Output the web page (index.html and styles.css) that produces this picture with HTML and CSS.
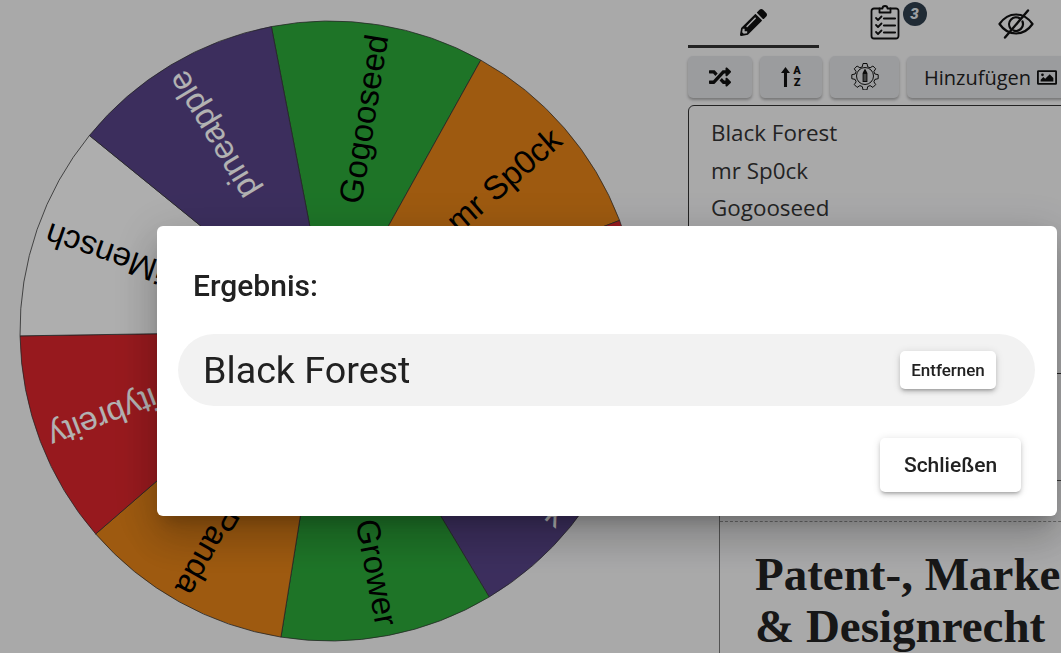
FILE: index.html
```html
<!DOCTYPE html>
<html lang="de">
<head>
<meta charset="utf-8">
<title>Glücksrad</title>
<link rel="stylesheet" href="styles.css">
</head>
<body>
<div class="app">
  <main class="wheel-col">
    <svg class="wheel" viewBox="0 0 688 653" width="688" height="653">
      <g transform="translate(330 331)">
        <g transform="rotate(9.1)"><path class="wedge green" d="M0 0L-106.03 -291.3A310 310 0 0 1 106.03 -291.3Z"/><text class="label" transform="rotate(-90)" x="300" y="11">Gogooseed</text></g>
        <g transform="rotate(49.1)"><path class="wedge orange" d="M0 0L-106.03 -291.3A310 310 0 0 1 106.03 -291.3Z"/><text class="label" transform="rotate(-90)" x="300" y="11">mr Sp0ck</text></g>
        <g transform="rotate(89.1)"><path class="wedge red" d="M0 0L-106.03 -291.3A310 310 0 0 1 106.03 -291.3Z"/><text class="label light" transform="rotate(-90)" x="300" y="11">Tiger</text></g>
        <g transform="rotate(129.1)"><path class="wedge purple" d="M0 0L-106.03 -291.3A310 310 0 0 1 106.03 -291.3Z"/><text class="label light" transform="rotate(-90)" x="300" y="11">Nick</text></g>
        <g transform="rotate(169.1)"><path class="wedge green" d="M0 0L-106.03 -291.3A310 310 0 0 1 106.03 -291.3Z"/><text class="label" transform="rotate(-90)" x="300" y="11">Grower</text></g>
        <g transform="rotate(209.1)"><path class="wedge orange" d="M0 0L-106.03 -291.3A310 310 0 0 1 106.03 -291.3Z"/><text class="label" transform="rotate(-90)" x="300" y="11">Panda</text></g>
        <g transform="rotate(249.1)"><path class="wedge red" d="M0 0L-106.03 -291.3A310 310 0 0 1 106.03 -291.3Z"/><text class="label light" transform="rotate(-90)" x="300" y="11">Kritybreity</text></g>
        <g transform="rotate(289.1)"><path class="wedge white" d="M0 0L-106.03 -291.3A310 310 0 0 1 106.03 -291.3Z"/><text class="label" transform="rotate(-90)" x="300" y="11">iMensch</text></g>
        <g transform="rotate(329.1)"><path class="wedge purple" d="M0 0L-106.03 -291.3A310 310 0 0 1 106.03 -291.3Z"/><text class="label light" transform="rotate(-90)" x="300" y="11">pineapple</text></g>
      </g>
    </svg>
  </main>
  <aside class="side">
    <nav class="tabs">
      <div class="tab tab-active">
        <svg class="ico-pencil" viewBox="0 0 512 512"><path d="M497.9 142.1l-46.1 46.1c-4.7 4.7-12.3 4.7-17 0l-111-111c-4.7-4.7-4.7-12.3 0-17l46.1-46.1c18.7-18.7 49.1-18.7 67.9 0l60.1 60.1c18.8 18.7 18.8 49.1 0 67.9zM284.2 99.8L21.6 362.4.4 483.9c-2.9 16.4 11.4 30.6 27.8 27.8l121.5-21.3 262.6-262.6c4.7-4.7 4.7-12.3 0-17l-111-111c-4.8-4.7-12.4-4.7-17.1 0zM124.1 339.9c-5.5-5.5-5.5-14.3 0-19.8l154-154c5.5-5.5 14.3-5.5 19.8 0s5.5 14.3 0 19.8l-154 154c-5.5 5.5-14.3 5.5-19.8 0zM88 424h48v36.3l-64.5 11.3-31.1-31.1L51.7 376H88v48z"/></svg>
      </div>
      <div class="tab">
        <span class="clip-wrap">
          <svg class="ico-clip" viewBox="0 0 30 38" fill="none" stroke="#111" stroke-width="1.8" stroke-linecap="round" stroke-linejoin="round">
            <path d="M9.500 6.500H4a2.500 2.500 0 0 0-2.500 2.500v25A2.500 2.500 0 0 0 4 36.500h22a2.500 2.500 0 0 0 2.500-2.500V9A2.500 2.500 0 0 0 26 6.500h-5.500"/>
            <path d="M9.500 10.500V6.500h3a2.500 2.500 0 0 1 5 0h3v4z"/>
            <path d="M6 16l2 2 3.500-3.500M6 23l2 2 3.500-3.500M6 30l2 2 3.500-3.500"/>
            <path stroke-width="2.200" d="M14 16.500h11M14 23.500h11M14 30.500h11"/>
          </svg>
          <span class="badge">3</span>
        </span>
      </div>
      <div class="tab">
        <svg class="ico-eye" viewBox="0 0 36 30" fill="none" stroke="#111" stroke-width="2.200" stroke-linecap="round" stroke-linejoin="round">
          <path d="M1.500 15C6 8.500 11.500 5.500 18 5.500S30 8.500 34.500 15C30 21.500 24.500 24.500 18 24.500S6 21.500 1.500 15z"/>
          <path d="M12.500 19.500A7 7 0 0 1 22 9.500M24.500 12.500A7 7 0 0 1 15.500 21.500"/>
          <path stroke-width="2.400" d="M7 28.500L30 1.500"/>
        </svg>
      </div>
    </nav>
    <div class="toolbar">
      <button class="tool tool-a"><svg class="ico-shuffle" viewBox="0 0 512 512"><path d="M504.971 359.029c9.373 9.373 9.373 24.569 0 33.941l-80 79.984c-15.01 15.01-40.971 4.49-40.971-16.971V416h-58.785a12.004 12.004 0 0 1-8.773-3.812l-70.556-75.596 53.333-57.143L352 336h32v-39.981c0-21.438 25.943-31.998 40.971-16.971l80 79.981zM12 176h84l52.781 56.551 53.333-57.143-70.556-75.596A11.999 11.999 0 0 0 122.785 96H12c-6.627 0-12 5.373-12 12v56c0 6.627 5.373 12 12 12zm372 0v39.984c0 21.46 25.961 31.98 40.971 16.971l80-79.984c9.373-9.373 9.373-24.569 0-33.941l-80-79.981C409.943 24.021 384 34.582 384 56.019V96h-58.785a12.004 12.004 0 0 0-8.773 3.812L96 336H12c-6.627 0-12 5.373-12 12v56c0 6.627 5.373 12 12 12h110.785c3.326 0 6.503-1.381 8.773-3.812L352 176h32z"/></svg></button>
      <button class="tool tool-b">
        <svg class="ico-arrow" viewBox="0 0 10 22"><path d="M5 0L10 6.500H6.700V22H3.300V6.500H0z"/></svg>
        <span class="az"><span>A</span><span>Z</span></span>
      </button>
      <button class="tool tool-c">
        <svg class="ico-gear" viewBox="0 0 28 28" fill="none" stroke="#111" stroke-width="1">
          <path d="M12 1.500h4l.7 3.300 2.400 1 2.800-1.800 2.800 2.800-1.800 2.800 1 2.400 3.300.7v4l-3.300.7-1 2.400 1.800 2.800-2.800 2.800-2.800-1.800-2.400 1-.7 3.300h-4l-.7-3.300-2.400-1-2.800 1.800-2.800-2.800 1.800-2.800-1-2.400-3.300-.7v-4l3.300-.7 1-2.400L3.300 6.800l2.800-2.800 2.800 1.800 2.400-1z"/>
          <circle cx="14" cy="14" r="8.500"/>
          <path fill="#111" stroke="none" d="M14 6.500l2.400 4.500v9h-4.800v-9z"/>
          <path stroke="#a5a6a7" stroke-width=".8" d="M13.200 12v7M14.800 12v7"/>
        </svg>
      </button>
      <button class="tool tool-d">
        <span>Hinzufügen</span>
        <svg class="ico-image" viewBox="0 0 22 18"><path fill-rule="evenodd" d="M1.500 1h19A1.500 1.500 0 0 1 22 2.500v13a1.500 1.500 0 0 1-1.500 1.500h-19A1.500 1.500 0 0 1 0 15.500v-13A1.500 1.500 0 0 1 1.500 1zM2 3v12h18V3z"/><path d="M4 13.500v-2l3-3 2 2 5-5 4 4v4z"/><circle cx="6" cy="6" r="1.500"/></svg>
      </button>
    </div>
    <div class="entries">
      <div>Black Forest</div>
      <div>mr Sp0ck</div>
      <div>Gogooseed</div>
      <div>pineapple</div>
      <div>iMensch</div>
      <div>Kritybreity</div>
      <div>Panda</div>
    </div>
    <div class="info"></div>
    <article class="article">
      <div class="dashed"></div>
      <h1 class="headline">Patent-, Marken<br>&amp; Designrecht</h1>
    </article>
  </aside>
</div>
<div class="overlay">
  <section class="dialog">
    <h2 class="dialog-title">Ergebnis:</h2>
    <div class="result">
      <span class="result-name">Black Forest</span>
      <button class="btn btn-small">Entfernen</button>
    </div>
    <div class="dialog-actions">
      <button class="btn btn-large">Schließen</button>
    </div>
  </section>
</div>
</body>
</html>
```
FILE: styles.css
```css
* { box-sizing: border-box; }
html, body { margin: 0; height: 653px; overflow: hidden; background: #f2f2f3; }
.app { display: flex; width: 1061px; height: 653px; overflow: hidden; }
.wheel-col { flex: 0 0 688px; height: 653px; }
.wheel { display: block; }
.wedge { stroke: #333; stroke-width: .7; }
.green { fill: #2ba739; }
.orange { fill: #e28117; }
.red { fill: #d9252b; }
.purple { fill: #564386; }
.white { fill: #fafafa; }
.label { font: 33px "Liberation Sans", Arial, sans-serif; fill: #000; text-anchor: end; }
.label.light { fill: #fff; }

.side { flex: 0 0 393px; width: 393px; display: flex; flex-direction: column; font-family: "Open Sans", "Noto Sans", sans-serif; }
.tabs { display: flex; height: 48px; flex: none; }
.tab { flex: 0 0 131px; display: flex; justify-content: center; align-items: center; }
.tab-active { border-bottom: 3px solid #333; }
.ico-pencil { width: 27px; height: 27px; fill: #111; margin-top: -1px; }
.clip-wrap { position: relative; display: block; width: 30px; height: 38px; margin-top: -6px; }
.ico-clip { display: block; width: 30px; height: 38px; }
.badge { position: absolute; left: 33px; top: 0; width: 24px; height: 24px; border-radius: 50%; background: #2f3e4d; color: #dfe3e8; font: italic 900 15px/24px Roboto, sans-serif; text-align: center; }
.ico-eye { width: 36px; height: 30px; margin-top: -1px; }

.toolbar { display: flex; gap: 8px; margin-top: 8px; height: 42px; flex: none; }
.tool { height: 42px; padding: 0; border: 0; border-radius: 5px; background: #dfe0e2; box-shadow: 0 2px 3px rgba(0,0,0,.3); display: flex; align-items: center; justify-content: center; font: inherit; color: #222; }
.tool-a { width: 64px; }
.tool-b { width: 62px; gap: 3px; }
.tool-c { width: 69px; }
.tool-d { width: 174px; justify-content: flex-start; padding-left: 17px; font-size: 20px; gap: 6px; }
.ico-shuffle { width: 22px; height: 22px; fill: #111; }
.ico-arrow { width: 9px; height: 20px; fill: #111; }
.az { display: flex; flex-direction: column; font: 900 11px/12px Roboto, sans-serif; color: #111; }
.ico-gear { width: 28px; height: 28px; margin-top: -2px; }
.ico-image { width: 20px; height: 17px; fill: #111; }

.entries { margin-top: 7px; height: 269px; flex: none; border: 1px solid #333; border-radius: 6px; padding: 8px 22px; font-size: 22.400px; line-height: 37.500px; color: #333; overflow: hidden; }
.info { height: 107px; flex: none; border-bottom: 1px solid #555; }
.article { margin-left: 31px; padding-top: 40px; border-left: 1px solid #777; flex: 1; }
.dashed { border-top: 1px dashed #999; }
.headline { margin: 26px 0 0 35px; font: 700 47px/52px "Liberation Serif", serif; color: #222; white-space: nowrap; }

.overlay { position: fixed; inset: 0; background: rgba(0,0,0,.3); display: flex; justify-content: flex-end; align-items: flex-start; }
.dialog { width: 900px; height: 290px; margin: 226px 4px 0 0; background: #fff; border-radius: 6px; box-shadow: 0 11px 15px -7px rgba(0,0,0,.2), 0 24px 38px 3px rgba(0,0,0,.14), 0 9px 46px 8px rgba(0,0,0,.12); padding: 0 21px; font-family: Roboto, sans-serif; color: #212121; display: flex; flex-direction: column; }
.dialog-title { margin: 0; padding: 43px 0 0 15px; font-size: 30px; line-height: 34px; font-weight: 500; }
.result { margin-top: 31px; height: 72px; width: 857px; flex: none; border-radius: 36px; background: #f2f2f2; display: flex; align-items: center; justify-content: space-between; padding: 0 39px 0 25px; }
.result-name { font-size: 37.700px; line-height: 72px; }
.btn { border: 0; background: #fff; border-radius: 5px; color: #212121; font-family: Roboto, sans-serif; font-weight: 500; box-shadow: 0 3px 3px -2px rgba(0,0,0,.2), 0 3px 4px rgba(0,0,0,.14), 0 1px 8px rgba(0,0,0,.12); padding: 0; }
.btn-small { width: 96px; height: 38px; font-size: 17px; }
.btn-large { width: 141px; height: 54px; font-size: 21px; }
.dialog-actions { display: flex; justify-content: flex-end; margin-top: 32px; padding-right: 15px; }
```
